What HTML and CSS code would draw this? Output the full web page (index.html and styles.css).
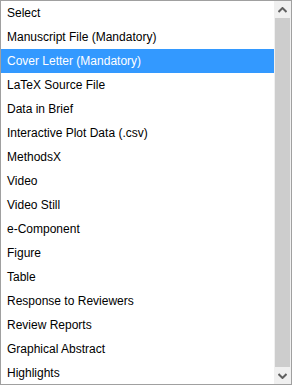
FILE: index.html
```html
<!DOCTYPE html>
<html lang="en">
<head>
    <meta charset="UTF-8">
    <title>File Type</title>
    <link rel="stylesheet" href="styles.css">
</head>
<body>
    <!-- File type list box -->
    <div class="listbox">
        <div class="options">
            <div class="option">Select</div>
            <div class="option">Manuscript File (Mandatory)</div>
            <div class="option selected">Cover Letter (Mandatory)</div>
            <div class="option">LaTeX Source File</div>
            <div class="option">Data in Brief</div>
            <div class="option">Interactive Plot Data (.csv)</div>
            <div class="option">MethodsX</div>
            <div class="option">Video</div>
            <div class="option">Video Still</div>
            <div class="option">e-Component</div>
            <div class="option">Figure</div>
            <div class="option">Table</div>
            <div class="option">Response to Reviewers</div>
            <div class="option">Review Reports</div>
            <div class="option">Graphical Abstract</div>
            <div class="option">Highlights</div>
        </div>
        <div class="scrollbar">
            <div class="arrow">
                <svg width="9" height="6" viewBox="0 0 9 6"><path d="M0.5 5 L4.5 1 L8.5 5" fill="none" stroke="#606060" stroke-width="2"/></svg>
            </div>
            <div class="track"><div class="thumb"></div></div>
            <div class="arrow">
                <svg width="9" height="6" viewBox="0 0 9 6"><path d="M0.5 1 L4.5 5 L8.5 1" fill="none" stroke="#606060" stroke-width="2"/></svg>
            </div>
        </div>
    </div>
</body>
</html>
```

FILE: styles.css
```css
/* General styles */
body {
    margin: 0;
    background-color: #fff;
    font-family: "Liberation Sans", Arial, sans-serif;
}

.listbox {
    display: flex;
    width: 290px;
    height: 383px;
    border: 1px solid #a0a0a0;
    background-color: #fff;
    overflow: hidden;
}

.options {
    flex: 1;
}

.option {
    height: 24px;
    line-height: 24px;
    padding-left: 6px;
    font-size: 12px;
    color: #000;
    white-space: nowrap;
}

.option.selected {
    background-color: #3399ff;
    color: #fff;
}

/* Scrollbar */
.scrollbar {
    display: flex;
    flex-direction: column;
    width: 17px;
    background-color: #f0f0f0;
}

.arrow {
    display: flex;
    align-items: center;
    justify-content: center;
    height: 17px;
}

.track {
    flex: 1;
    padding: 0 1px;
}

.thumb {
    height: 100%;
    background-color: #cdcdcd;
}
```
